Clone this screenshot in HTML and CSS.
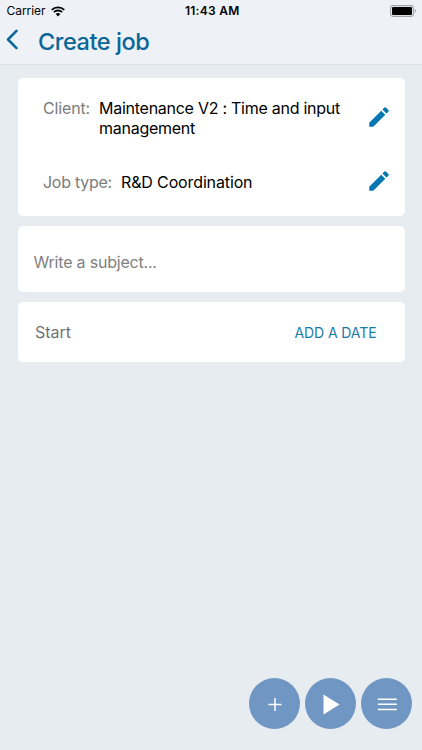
FILE: index.html
```html
<!DOCTYPE html>
<html lang="en">
<head>
<meta charset="utf-8">
<title>Create job</title>
<link rel="stylesheet" href="styles.css">
</head>
<body>
<div class="screen">
  <header class="top">
    <div class="status">
      <div class="carrier"><span>Carrier</span>
        <svg class="wifi" width="14" height="11" viewBox="0 0 14 11"><path d="M.7 3.900a9 9 0 0 1 12.600 0M2.900 6.200a5.800 5.800 0 0 1 8.200 0" fill="none" stroke="#000" stroke-width="1.800"/><path d="M4.700 8.100a3.300 3.300 0 0 1 4.600 0L7 10.600z"/></svg>
      </div>
      <div class="time">11:43 AM</div>
      <svg class="battery" width="27" height="12" viewBox="0 0 27 12"><rect x=".6" y=".6" width="22.800" height="10.800" rx="2.600" fill="none" stroke="#a2a4a8" stroke-width="1.100"/><rect x="2" y="2" width="20" height="8" rx="1.200"/><path d="M24.600 4v4q1.400-.6 1.400-2t-1.400-2" fill="#a2a4a8"/></svg>
    </div>
    <div class="nav">
      <svg class="back" width="13" height="22" viewBox="0 0 13 22"><path d="M11.500 1.900 3 10.500l8.500 8.600" fill="none" stroke="#0a6696" stroke-width="2.500" stroke-linecap="round" stroke-linejoin="round"/></svg>
      <h1>Create job</h1>
    </div>
  </header>
  <main>
    <section class="card details">
      <div class="row client"><span class="label">Client:</span><span class="value">Maintenance V2 : Time and input<br>management</span>
        <svg class="pencil" width="26" height="26" viewBox="0 0 24 24"><path d="M3 17.250V21h3.750L17.810 9.940l-3.750-3.750L3 17.250zM20.710 7.040a1 1 0 0 0 0-1.410l-2.340-2.340a1 1 0 0 0-1.410 0l-1.830 1.830 3.750 3.750z"/></svg>
      </div>
      <div class="row type"><span class="label">Job type:</span><span class="value">R&amp;D Coordination</span>
        <svg class="pencil" width="26" height="26" viewBox="0 0 24 24"><path d="M3 17.250V21h3.750L17.810 9.940l-3.750-3.750L3 17.250zM20.710 7.040a1 1 0 0 0 0-1.410l-2.340-2.340a1 1 0 0 0-1.410 0l-1.830 1.830 3.750 3.750z"/></svg>
      </div>
    </section>
    <section class="card subject"><span>Write a subject...</span></section>
    <section class="card start"><span class="start-label">Start</span><span class="add">ADD A DATE</span></section>
  </main>
  <footer>
    <div class="fab"><svg width="51" height="51" viewBox="0 0 51 51"><path d="M19.500 26.500h13M26 20v13" stroke="#fff" stroke-width="1.500"/></svg></div>
    <div class="fab"><svg width="51" height="51" viewBox="0 0 51 51"><path d="M18.500 16.500v20l16-10z" fill="#fff"/></svg></div>
    <div class="fab"><svg width="51" height="51" viewBox="0 0 51 51"><path d="M17.300 21.200h18M17.300 26.300h18M17.300 31.400h18" stroke="#fff" stroke-width="1.500" stroke-linecap="round"/></svg></div>
  </footer>
</div>
</body>
</html>
```
FILE: styles.css
```css
* { box-sizing: border-box; }
body { margin: 0; font-family: Inter, "Liberation Sans", sans-serif; background: #e7ecf0; }
svg { display: block; flex: none; }
.screen { width: 422px; height: 750px; display: flex; flex-direction: column; }
.top { height: 65px; background: #eef2f7; border-bottom: 1px solid #dde1e5; }
.status { height: 22px; display: grid; grid-template-columns: 1fr auto 1fr; align-items: center; padding: 0 5px 0 6.500px; font-size: 12px; line-height: 22px; }
.carrier { display: flex; align-items: center; gap: 5.500px; letter-spacing: -.05px; }
.time { font-weight: 600; letter-spacing: .28px; padding-left: 1px; }
.battery { justify-self: end; }
.nav { display: flex; align-items: center; height: 38px; padding-left: 5px; }
.back { margin-top: -3px; }
h1 { margin: 1px 0 0 20px; color: #0a6696; font-size: 23.500px; font-weight: 500; letter-spacing: -.45px; line-height: 38px; }
main { flex: 1; padding: 13px 17.500px; display: flex; flex-direction: column; gap: 10px; font-size: 16px; }
.card { background: #fff; border-radius: 5px; display: flex; flex: none; }
.details { height: 138px; flex-direction: column; padding: 20px 13px 0 25.500px; }
.row { display: flex; line-height: 20px; letter-spacing: -.26px; }
.client { height: 74px; }
.label { color: #7c7c7c; }
.client .label { letter-spacing: -.15px; }
.value { margin-left: 9px; color: #000; flex: 1; }
.type .value { letter-spacing: -.13px; }
.pencil { fill: #0876b2; margin-top: 5.500px; }
.type .pencil { margin-top: -4.500px; }
.subject { height: 66px; align-items: center; padding: 5px 16px 0; color: #808080; letter-spacing: -.2px; }
.start { height: 60px; align-items: center; justify-content: space-between; padding: 0 28px 0 17.500px; }
.start-label { color: #737373; }
.add { color: #1a7baa; font-size: 14px; letter-spacing: -.1px; }
footer { height: 72px; display: flex; justify-content: flex-end; gap: 5px; padding-right: 10.500px; }
.fab { width: 51px; height: 51px; border-radius: 50%; background: #7097c3; }
```
